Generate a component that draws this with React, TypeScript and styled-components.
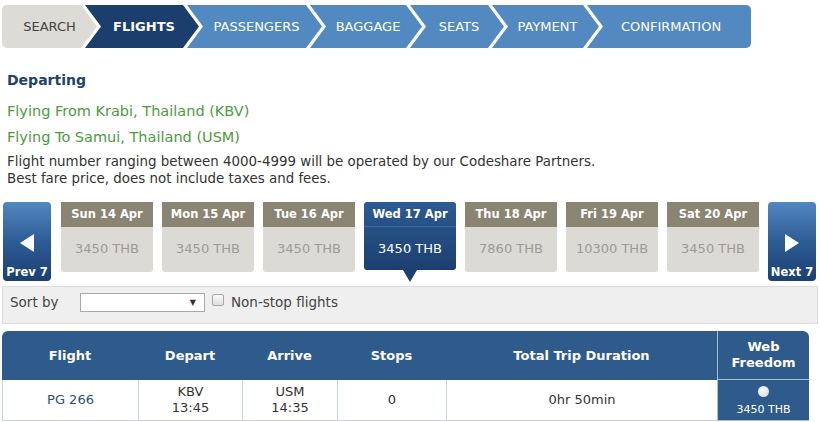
import React from "react";
import styled, { createGlobalStyle, css } from "styled-components";

const GlobalStyle = createGlobalStyle`
  html, body {
    margin: 0;
    padding: 0;
    background: #fff;
  }
  body {
    font-family: "DejaVu Sans", Verdana, sans-serif;
    color: #333;
  }
`;

const Page = styled.div`
  width: 820px;
  padding: 5px 0 0 2px;
  box-sizing: border-box;
`;

// 상단 진행 단계 (chevron stepper)
const Stepper = styled.div`
  display: flex;
  height: 43px;
  width: 749px;
  border-radius: 5px;
  overflow: hidden;
`;

type StepProps = { $w: number; $kind: "done" | "active" | "todo"; $first?: boolean; $last?: boolean };

const Step = styled.div<StepProps>`
  flex: 0 0 ${(p) => p.$w}px;
  margin-left: ${(p) => (p.$first ? 0 : -12)}px;
  display: flex;
  align-items: center;
  justify-content: center;
  padding-left: ${(p) => (p.$first ? 0 : 4)}px;
  box-sizing: border-box;
  font-size: 13px;
  text-transform: uppercase;
  ${(p) =>
    p.$first
      ? css`clip-path: polygon(0 0, calc(100% - 16px) 0, 100% 50%, calc(100% - 16px) 100%, 0 100%);`
      : p.$last
      ? css`clip-path: polygon(0 0, 100% 0, 100% 100%, 0 100%, 16px 50%);`
      : css`clip-path: polygon(0 0, calc(100% - 16px) 0, 100% 50%, calc(100% - 16px) 100%, 0 100%, 16px 50%);`}
  ${(p) =>
    p.$kind === "done"
      ? css`
          background: #dddbd5;
          color: #444;
        `
      : p.$kind === "active"
      ? css`
          background: #1c3e6d;
          color: #fff;
          font-weight: bold;
        `
      : css`
          background: #5189c0;
          color: #fff;
        `}
`;

const Info = styled.div`
  padding-left: 5px;
  margin-top: 22px;
`;

const Heading = styled.h2`
  margin: 0;
  font-size: 14px;
  line-height: 20px;
  font-weight: bold;
  color: #22426a;
`;

const Route = styled.p<{ $gap: number }>`
  margin: ${(p) => p.$gap}px 0 0;
  font-size: 14.5px;
  line-height: 20px;
  color: #4f9a3f;
`;

const Note = styled.p`
  margin: 6px 0 0;
  font-size: 13.4px;
  line-height: 17px;
  color: #333;
`;

// 날짜 선택 스트립
const DateStrip = styled.div`
  display: flex;
  align-items: flex-start;
  gap: 9px;
  margin-top: 15px;
  padding-left: 1px;
  height: 83px;
`;

const NavButton = styled.div<{ $next?: boolean }>`
  flex: 0 0 48px;
  height: 79px;
  margin-right: ${(p) => (p.$next ? 0 : 1)}px;
  border-radius: 4px;
  background: linear-gradient(180deg, #5387c0 0%, #2d5c95 50%, #1b3f72 100%);
  color: #fff;
  display: flex;
  flex-direction: column;
  align-items: center;
  justify-content: flex-end;
  padding-bottom: 2px;
  box-sizing: border-box;
  font-size: 11.5px;
  font-weight: bold;
  gap: 12px;
`;

const Arrow = styled.svg`
  display: block;
`;

const DayCell = styled.div<{ $selected?: boolean }>`
  position: relative;
  flex: 0 0 92px;
  display: flex;
  flex-direction: column;
  text-align: center;
  ${(p) =>
    p.$selected &&
    css`
      border-radius: 3px;
      background: linear-gradient(180deg, #2d5b93 0%, #1c3f70 100%);
      &::after {
        content: "";
        position: absolute;
        left: 50%;
        bottom: -12px;
        margin-left: -7px;
        border-left: 7px solid transparent;
        border-right: 7px solid transparent;
        border-top: 12px solid #1c3f70;
      }
    `}
`;

const DayHead = styled.div<{ $selected?: boolean }>`
  height: 25px;
  line-height: 24px;
  font-size: 11.5px;
  font-weight: bold;
  color: #fff;
  background: ${(p) => (p.$selected ? "transparent" : "#8a8472")};
  border-bottom: 1px solid ${(p) => (p.$selected ? "#3a6aa3" : "#8a8472")};
  box-sizing: border-box;
`;

const DayPrice = styled.div<{ $selected?: boolean }>`
  height: ${(p) => (p.$selected ? 43 : 45)}px;
  line-height: 43px;
  font-size: 13px;
  color: ${(p) => (p.$selected ? "#fff" : "#9a9a9a")};
  background: ${(p) => (p.$selected ? "transparent" : "#dcdad4")};
  border-radius: 0 0 3px 3px;
`;

// 정렬 바
const SortBar = styled.div`
  margin-top: 1px;
  width: 816px;
  height: 38px;
  box-sizing: border-box;
  background: #efefef;
  border: 1px solid #dcdcdc;
  display: flex;
  align-items: flex-start;
  padding: 6px 0 0 7px;
  font-size: 13.5px;
  line-height: 19px;
  color: #444;
`;

const SortLabel = styled.span`
  width: 70px;
`;

const Select = styled.div`
  width: 125px;
  height: 19px;
  box-sizing: border-box;
  background: #fff;
  border: 1px solid #aaa;
  display: flex;
  align-items: center;
  justify-content: flex-end;
  padding-right: 8px;
  font-size: 8px;
  color: #333;
`;

const Check = styled.span`
  width: 12px;
  height: 12px;
  box-sizing: border-box;
  margin: 1px 7px 0 7px;
  border: 1px solid #a8a8a8;
  border-radius: 2px;
  background: linear-gradient(180deg, #fafafa, #dedede);
`;

// 항공편 테이블
const Table = styled.div`
  margin-top: 7px;
  width: 807px;
  display: grid;
  grid-template-columns: 136px 104px 95px 109px 271px 92px;
  border-radius: 6px 6px 0 0;
  overflow: hidden;
`;

const HeadCell = styled.div<{ $fare?: boolean }>`
  height: 49px;
  background: #2e5a8c;
  color: #fff;
  font-weight: bold;
  font-size: 13px;
  line-height: 16px;
  display: flex;
  align-items: center;
  justify-content: center;
  text-align: center;
  box-sizing: border-box;
  ${(p) =>
    p.$fare &&
    css`
      border-left: 1px solid #a9bfd6;
      border-bottom: 1px solid #a9bfd6;
    `}
`;

const Cell = styled.div<{ $accent?: boolean }>`
  height: 41px;
  box-sizing: border-box;
  border-left: 1px solid #c9d5e2;
  border-bottom: 1px solid #c9d5e2;
  display: flex;
  flex-direction: column;
  align-items: center;
  justify-content: center;
  font-size: 13px;
  line-height: 16px;
  color: ${(p) => (p.$accent ? "#2b5079" : "#333")};
`;

const FareCell = styled.div`
  height: 41px;
  box-sizing: border-box;
  background: #2e5a8c;
  border-left: 1px solid #a9bfd6;
  border-bottom: 1px solid #a9bfd6;
  display: flex;
  flex-direction: column;
  align-items: center;
  justify-content: center;
  gap: 6px;
  color: #fff;
  font-size: 11px;
`;

const Radio = styled.span`
  width: 11px;
  height: 11px;
  border-radius: 50%;
  background: radial-gradient(circle at 40% 35%, #fafafa, #d6d6d6);
  margin-top: 2px;
`;

const steps: { label: string; w: number; kind: "done" | "active" | "todo" }[] = [
  { label: "Search", w: 95, kind: "done" },
  { label: "Flights", w: 114, kind: "active" },
  { label: "Passengers", w: 135, kind: "todo" },
  { label: "Baggage", w: 112, kind: "todo" },
  { label: "Seats", w: 94, kind: "todo" },
  { label: "Payment", w: 107, kind: "todo" },
  { label: "Confirmation", w: 164, kind: "todo" },
];

const days = [
  { day: "Sun 14 Apr", price: "3450 THB" },
  { day: "Mon 15 Apr", price: "3450 THB" },
  { day: "Tue 16 Apr", price: "3450 THB" },
  { day: "Wed 17 Apr", price: "3450 THB", selected: true },
  { day: "Thu 18 Apr", price: "7860 THB" },
  { day: "Fri 19 Apr", price: "10300 THB" },
  { day: "Sat 20 Apr", price: "3450 THB" },
];

export default function App() {
  return (
    <>
      <GlobalStyle />
      <Page>
        <Stepper>
          {steps.map((s, i) => (
            <Step key={s.label} $w={s.w} $kind={s.kind} $first={i === 0} $last={i === steps.length - 1}>
              {s.label}
            </Step>
          ))}
        </Stepper>

        <Info>
          <Heading>Departing</Heading>
          <Route $gap={11}>Flying From Krabi, Thailand (KBV)</Route>
          <Route $gap={6}>Flying To Samui, Thailand (USM)</Route>
          <Note>
            Flight number ranging between 4000-4999 will be operated by our Codeshare Partners.
            <br />
            Best fare price, does not include taxes and fees.
          </Note>
        </Info>

        <DateStrip>
          <NavButton>
            <Arrow width="16" height="20" viewBox="0 0 16 20">
              <polygon points="15,1 15,19 1,10" fill="#fff" />
            </Arrow>
            <span>Prev 7</span>
          </NavButton>
          {days.map((d) => (
            <DayCell key={d.day} $selected={d.selected}>
              <DayHead $selected={d.selected}>{d.day}</DayHead>
              <DayPrice $selected={d.selected}>{d.price}</DayPrice>
            </DayCell>
          ))}
          <NavButton $next>
            <Arrow width="16" height="20" viewBox="0 0 16 20">
              <polygon points="1,1 1,19 15,10" fill="#fff" />
            </Arrow>
            <span>Next 7</span>
          </NavButton>
        </DateStrip>

        <SortBar>
          <SortLabel>Sort by</SortLabel>
          <Select>▼</Select>
          <Check />
          <span>Non-stop flights</span>
        </SortBar>

        <Table>
          <HeadCell>Flight</HeadCell>
          <HeadCell>Depart</HeadCell>
          <HeadCell>Arrive</HeadCell>
          <HeadCell>Stops</HeadCell>
          <HeadCell>Total Trip Duration</HeadCell>
          <HeadCell $fare>
            Web
            <br />
            Freedom
          </HeadCell>

          <Cell $accent>PG 266</Cell>
          <Cell>
            <span>KBV</span>
            <span>13:45</span>
          </Cell>
          <Cell>
            <span>USM</span>
            <span>14:35</span>
          </Cell>
          <Cell>0</Cell>
          <Cell>0hr 50min</Cell>
          <FareCell>
            <Radio />
            <span>3450 THB</span>
          </FareCell>
        </Table>
      </Page>
    </>
  );
}
